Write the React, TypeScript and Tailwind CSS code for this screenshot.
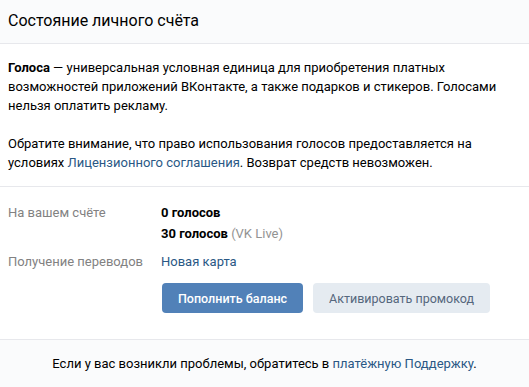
export default function App() {
  return (
    <div className="w-[529px] h-[387px] overflow-hidden bg-white text-[13px] leading-[19px] text-black font-['Roboto',sans-serif]">
      <div className="h-[44px] bg-[#fafbfc] border-b border-[#e7e8ec] px-[8px] flex items-center">
        <h1 className="text-[16px] leading-[20px] text-black -mt-[1px]">Состояние личного счёта</h1>
      </div>

      <div className="px-[8px] pt-[14px] pb-[14px] border-b border-[#e7e8ec]">
        <p>
          <b className="font-bold">Голоса</b> — универсальная условная единица для приобретения платных
          возможностей приложений ВКонтакте, а также подарков и стикеров. Голосами нельзя оплатить рекламу.
        </p>
        <p className="mt-[19px]">
          Обратите внимание, что право использования голосов предоставляется на условиях{" "}
          <a className="text-[#2a5885]">Лицензионного соглашения</a>. Возврат средств невозможен.
        </p>
      </div>

      <div className="px-[8px] pt-[16px] pb-[26px]">
        <div className="flex">
          <div className="w-[153px] text-[#828282]">На вашем счёте</div>
          <div className="flex flex-col gap-[2px]">
            <div className="font-bold">0 голосов</div>
            <div>
              <span className="font-bold">30 голосов</span> <span className="text-[#939393]">(VK Live)</span>
            </div>
          </div>
        </div>
        <div className="flex mt-[9px]">
          <div className="w-[153px] text-[#828282]">Получение переводов</div>
          <a className="text-[#2a5885]">Новая карта</a>
        </div>
        <div className="flex gap-[10px] ml-[154px] mt-[12px]">
          <button className="h-[30px] px-[16px] rounded-[4px] bg-[#5181b8] text-white text-[12.5px] font-medium">
            Пополнить баланс
          </button>
          <button className="h-[30px] px-[16px] rounded-[4px] bg-[#e5ebf1] text-[#55677d] text-[12.5px]">
            Активировать промокод
          </button>
        </div>
      </div>

      <div className="border-t border-[#e7e8ec] bg-[#fafbfc] py-[14px] text-center">
        Если у вас возникли проблемы, обратитесь в <a className="text-[#2a5885]">платёжную Поддержку</a>.
      </div>
    </div>
  );
}
